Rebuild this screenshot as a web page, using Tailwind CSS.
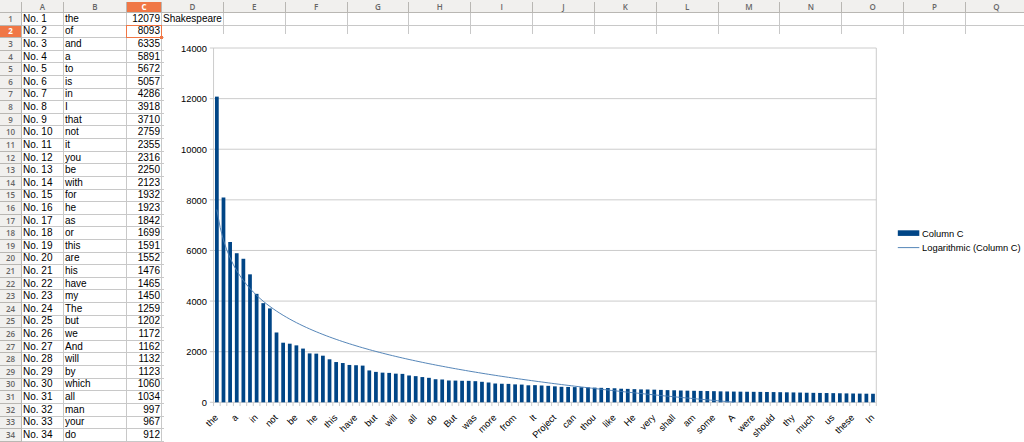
<!DOCTYPE html>
<html lang="en">
<head>
<meta charset="utf-8">
<title>Word frequency – Shakespeare</title>
<script src="https://cdn.jsdelivr.net/npm/@tailwindcss/browser@4"></script>
</head>
<body class="bg-white">
<main class="relative min-h-screen overflow-hidden bg-[#f1f0ee] pt-[2px] font-['Liberation_Sans',Arial,sans-serif] text-[10px] leading-none text-black">
  <table class="h-[440px] w-[calc(100%+4px)] table-fixed border-separate border-spacing-0 bg-white">
    <colgroup id="cols"><col class="w-[22px]"><col class="w-[42px]"><col class="w-[63px]"><col class="w-[35px]"></colgroup>
    <thead><tr id="head" class="h-[11px]"></tr></thead>
    <tbody id="body"></tbody>
  </table>
  <!-- chart object floating over the cells -->
  <figure class="absolute top-[34px] right-0 left-[164px] min-h-[408px] bg-white">
    <svg id="chart" viewBox="0 0 920 437" class="block h-auto w-full" role="img" aria-label="Word frequencies with logarithmic trend line"></svg>
  </figure>
</main>
<script>
const words = ['the','of','and','a','to','is','in','I','that','not','it','you','be','with','for','he','as','or','this','are','his','have','my','The','but','we','And','will','by','which','all','man','your','do'];
const counts = [12079,8093,6335,5891,5672,5057,4286,3918,3710,2759,2355,2316,2250,2123,1932,1923,1842,1699,1591,1552,1476,1465,1450,1259,1202,1172,1162,1132,1123,1060,1034,997,967,912,
  901,862,858,850,848,835,810,783,743,733,728,708,700,672,678,664,651,630,612,607,600,595,590,580,572,565,555,537,530,520,510,507,500,490,482,475,466,460,455,450,445,440,432,428,424,420,
  417,414,411,408,404,400,395,390,385,378,374,370,366,362,357,352,348,344,340,338];
const labels = ['the','a','in','not','be','he','this','have','but','will','all','do','But','was','more','from','It','Project','can','thou','like','He','very','shall','am','some','A','were','should','thy','much','us','these','In'];

const headBase = "border-r border-b border-[#b9b7b3] p-0 text-center font-['Open_Sans','Noto_Sans',sans-serif] text-[8px] leading-none ";
const plain = headBase + 'bg-[#f1f0ee] font-semibold text-[#666666]';
const active = headBase + 'bg-[#f07746] font-bold text-white';
const cell = 'border-r border-b border-[#c8c8c8] p-0 pl-px whitespace-nowrap';
const num = 'relative border-r border-b border-[#c8c8c8] p-0 pr-px text-right whitespace-nowrap';
// cell cursor: frame and fill handle drawn over the cell's own grid lines
const cursor = '<span class="absolute -inset-px z-10 border border-[#f07746]"></span><span class="absolute -right-[2px] -bottom-[2px] z-10 size-[3px] bg-[#f07746]"></span>';

const letters = 'ABCDEFGHIJKLMNOPQ'.split('');
document.getElementById('cols').insertAdjacentHTML('beforeend', '<col>'.repeat(14));
document.getElementById('head').innerHTML = `<td class="${plain}"></td>` +
  letters.map(l => `<th scope="col" class="${l === 'C' ? active : plain}">${l}</th>`).join('');
document.getElementById('body').innerHTML = words.map((w, i) =>
  `<tr><th scope="row" class="${i === 1 ? active : plain}">${i + 1}</th>` +
  `<td class="${cell}">No. ${i + 1}</td><td class="${cell}">${w}</td>` +
  `<td class="${num}">${counts[i]}${i === 1 ? cursor : ''}</td>` +
  `<td class="${cell}">${i === 0 ? 'Shakespeare' : ''}</td>` +
  `<td class="${cell}"></td>`.repeat(13) + '</tr>').join('');

const L = 53, R = 762, T = 15, B = 394, step = (R - L) / 100;
const y = v => B - v * (B - T) / 14000;
const x = n => L + (n - 0.5) * step;
let s = '<g class="stroke-[#c8c8c8]" stroke-width="1">';
for (let v = 0; v <= 14000; v += 2000) s += `<line x1="${L - 4}" x2="${R}" y1="${y(v)}" y2="${y(v)}"/>`;
for (let i = 0; i <= 100; i++) s += `<line x1="${L + i * step}" x2="${L + i * step}" y1="${B}" y2="${B + 4}"/>`;
s += `<line x1="${L}" x2="${L}" y1="${T}" y2="${B}"/><line x1="${R}" x2="${R}" y1="${T}" y2="${B}"/></g><g class="fill-[#004586]">`;
counts.forEach((v, i) => { s += `<rect x="${x(i + 1) - 2}" y="${y(v)}" width="4" height="${B - y(v)}"/>`; });
s += '</g>';
let pts = [];
for (let n = 1; n <= 79; n += 0.5) pts.push(x(n) + ',' + y(7614 - 1741 * Math.log(n)));
s += `<polyline points="${pts.join(' ')}" class="fill-none stroke-[#4a7db3]" stroke-width="1"/>`;
s += '<g class="fill-black text-[10px]">';
for (let v = 0; v <= 14000; v += 2000) s += `<text x="46" y="${y(v) + 4}" text-anchor="end">${v}</text>`;
labels.forEach((t, i) => { const cx = x(1 + i * 3) + 2; s += `<text transform="translate(${cx} 411) rotate(-45)" text-anchor="end">${t}</text>`; });
s += '<text x="811" y="217">Column C</text><text x="811" y="232">Logarithmic (Column C)</text></g>';
s += '<rect x="785" y="210" width="23" height="6" class="fill-[#004586]"/><line x1="785" x2="808" y1="228.5" y2="228.5" class="stroke-[#4a7db3]" stroke-width="1"/>';
document.getElementById('chart').innerHTML = s;
</script>
</body>
</html>
